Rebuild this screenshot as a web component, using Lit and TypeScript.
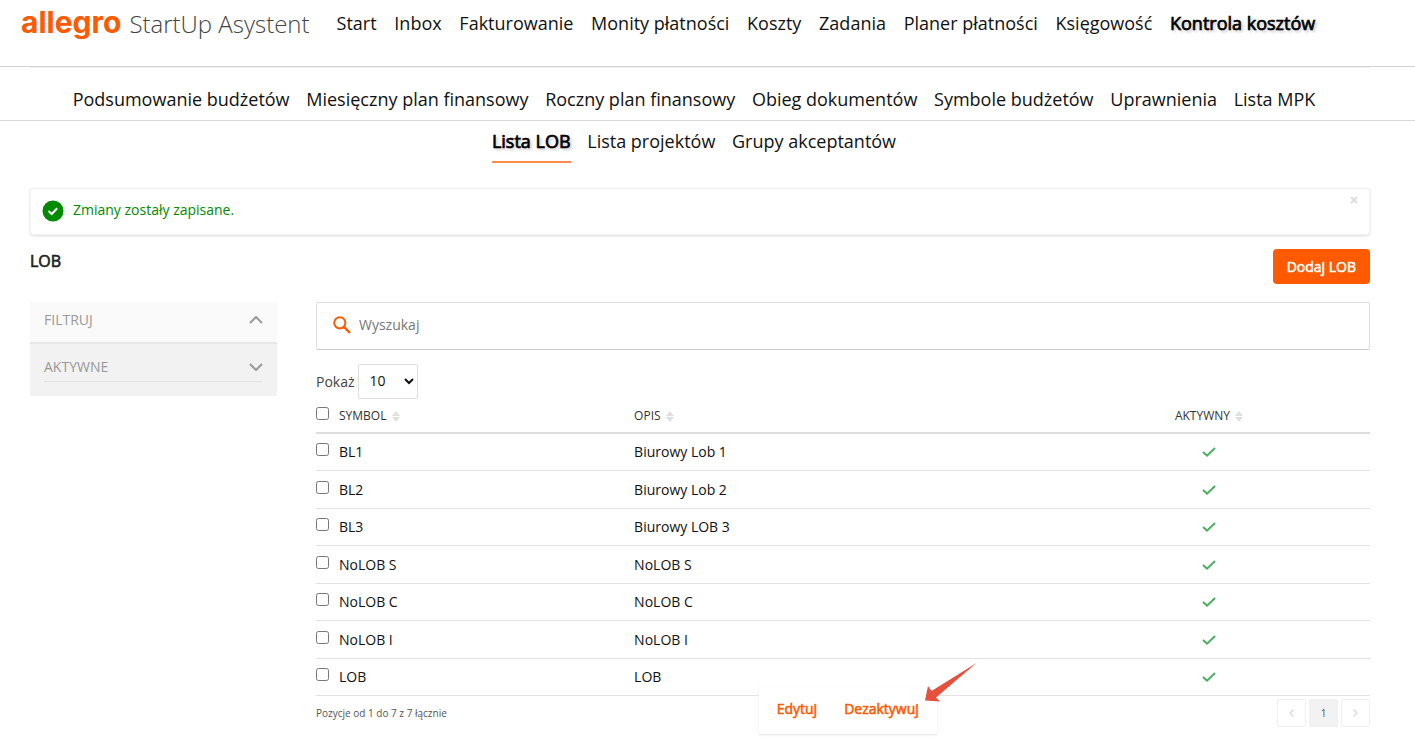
import { LitElement, html, css, svg } from "lit";
import { customElement, state } from "lit/decorators.js";
import { classMap } from "lit/directives/class-map.js";

interface Lob {
  symbol: string;
  opis: string;
}

const MAIN_NAV = [
  "Start",
  "Inbox",
  "Fakturowanie",
  "Monity płatności",
  "Koszty",
  "Zadania",
  "Planer płatności",
  "Księgowość",
  "Kontrola kosztów",
];

const SECTION_NAV = [
  "Podsumowanie budżetów",
  "Miesięczny plan finansowy",
  "Roczny plan finansowy",
  "Obieg dokumentów",
  "Symbole budżetów",
  "Uprawnienia",
  "Lista MPK",
];

const TABS = ["Lista LOB", "Lista projektów", "Grupy akceptantów"];

const ROWS: Lob[] = [
  { symbol: "BL1", opis: "Biurowy Lob 1" },
  { symbol: "BL2", opis: "Biurowy Lob 2" },
  { symbol: "BL3", opis: "Biurowy LOB 3" },
  { symbol: "NoLOB S", opis: "NoLOB S" },
  { symbol: "NoLOB C", opis: "NoLOB C" },
  { symbol: "NoLOB I", opis: "NoLOB I" },
  { symbol: "LOB", opis: "LOB" },
];

const chevron = (points: string) => html`
  <svg class="chevron" viewBox="0 0 14 8" aria-hidden="true">
    ${svg`<polyline points=${points} fill="none" stroke="currentColor" stroke-width="2" />`}
  </svg>
`;

const sortIcon = html`
  <svg class="sort" viewBox="0 0 8 11" aria-hidden="true">
    <path d="M4 0 8 5H0z M0 6h8L4 11z" fill="#e0e0e0" />
  </svg>
`;

const tick = html`
  <svg class="tick" viewBox="0 0 14 10" role="img" aria-label="tak">
    <path d="M1 5 5 8.600 13 1" fill="none" stroke="#4caf5f" stroke-width="2" />
  </svg>
`;

@customElement("app-root")
export class AppRoot extends LitElement {
  @state() private noticeOpen = true;

  static styles = css`
    :host {
      display: block;
      min-height: 100vh;
      box-sizing: border-box;
      background: #fff;
      color: #222;
      font: 14px/20px "Open Sans", "Noto Sans", sans-serif;
    }
    * {
      box-sizing: border-box;
    }
    a {
      color: inherit;
      text-decoration: none;
    }
    button,
    input,
    select {
      font: inherit;
      color: inherit;
      margin: 0;
    }
    button {
      cursor: pointer;
      border: 0;
      background: none;
      padding: 0;
    }
    .strong,
    .nav .current {
      -webkit-text-stroke: 0.04em currentColor;
    }
    .topbar {
      display: flex;
      align-items: flex-start;
      height: 67px;
      padding: 8px 0 0 21px;
      border-bottom: 1px solid #d2d2d2;
      white-space: nowrap;
    }
    .brand {
      display: flex;
      align-items: baseline;
      gap: 8px;
      margin-right: 27px;
      line-height: 28px;
    }
    .brand-name {
      color: #ff5a00;
      font: 700 30px/28px Inter, sans-serif;
    }
    .brand-product {
      color: #444;
      font-size: 24px;
      font-weight: 300;
    }
    .nav {
      font-size: 18px;
      line-height: 30px;
      color: #111;
    }
    .nav a {
      display: inline-block;
      margin-right: 12px;
    }
    .main-nav a {
      margin-right: 13px;
    }
    .nav .current {
      color: #000;
      text-shadow: 2px 2px 3px #bbb;
    }
    .section-nav {
      padding: 0 15px 6px 0;
      text-align: center;
      border-bottom: 1px solid #d8d8d8;
    }
    .section-nav::before {
      content: "";
      display: block;
      height: 1px;
      margin: 0 30px 16px;
      background: #f0f0f0;
    }
    .tabs {
      padding: 5px 15px 0 0;
      text-align: center;
    }
    .tabs .current {
      height: 37px;
      border-bottom: 2px solid #ff8a4d;
    }
    .content {
      padding: 25px 45px 0 30px;
    }
    .notice {
      display: flex;
      align-items: flex-start;
      height: 47px;
      padding: 11px 11px 0;
      border: 1px solid #f2f2f2;
      border-radius: 3px;
      box-shadow: 0 1px 3px #ddd;
      color: #008a00;
    }
    .notice-icon {
      width: 22px;
      height: 22px;
      margin-right: 9px;
    }
    .notice-close {
      display: flex;
      margin: -4px 0 0 auto;
    }
    .notice-close svg {
      width: 8px;
      height: 8px;
    }
    .heading {
      display: flex;
      align-items: flex-start;
      justify-content: space-between;
      margin-top: 14px;
    }
    h1 {
      margin: 1px 0 0;
      font-size: 16px;
      line-height: 22px;
      font-weight: 400;
    }
    .add {
      height: 35px;
      padding: 0 14px;
      border-radius: 4px;
      background: #ff5a00;
      color: #fff;
    }
    .columns {
      display: grid;
      grid-template-columns: 247px minmax(0, 1fr);
      gap: 39px;
      align-items: start;
      margin-top: 18px;
    }
    .filters {
      color: #999;
      background: #f2f2f2;
      padding-bottom: 14px;
    }
    .filter-head,
    .filter-item {
      display: flex;
      align-items: center;
      justify-content: space-between;
      width: 100%;
    }
    .filter-head {
      height: 42px;
      padding: 0 14px 4px;
      background: #fafafa;
      border-bottom: 2px solid #e8e8e8;
    }
    .filter-item {
      width: calc(100% - 28px);
      height: 30px;
      margin: 8px 14px 0;
      border-bottom: 1px solid #e2e2e2;
    }
    .chevron {
      width: 14px;
      height: 8px;
    }
    .search {
      display: flex;
      align-items: center;
      gap: 8px;
      height: 48px;
      padding: 0 16px 2px;
      border: 1px solid #ddd;
      border-bottom-color: #ccc;
      border-radius: 2px;
    }
    .search svg {
      width: 18px;
      height: 18px;
    }
    .search input {
      flex: 1;
      border: 0;
      outline: 0;
      padding: 0;
    }
    .search input::placeholder {
      color: #777;
      opacity: 1;
    }
    .page-size {
      display: flex;
      align-items: center;
      gap: 3px;
      margin-top: 14px;
      color: #444;
    }
    .page-size select {
      width: 60px;
      height: 35px;
      padding: 0 0 2px 7px;
      border: 1px solid #ddd;
      border-radius: 2px;
      background: #fff;
      color: #111;
    }
    table {
      width: 100%;
      border-collapse: separate;
      border-spacing: 0;
      table-layout: fixed;
      color: #111;
    }
    th,
    td {
      padding: 0;
      text-align: left;
      vertical-align: middle;
      border-bottom: 1px solid #e2e2e2;
    }
    th {
      height: 35px;
      padding-top: 1px;
      font-size: 12px;
      font-weight: 400;
      color: #333;
      border-bottom: 2px solid #ddd;
    }
    td {
      height: 38px;
    }
    tr:nth-child(odd) td {
      height: 37px;
    }
    .check-col {
      width: 23px;
    }
    .symbol-col {
      width: 28%;
    }
    .active-col {
      width: 322px;
      text-align: center;
    }
    .box {
      display: block;
      width: 13px;
      height: 13px;
      margin-bottom: 5px;
    }
    .sort {
      width: 8px;
      height: 11px;
      margin-left: 2px;
      vertical-align: -2px;
    }
    .tick {
      width: 14px;
      height: 10px;
    }
    .results {
      position: relative;
    }
    .table-foot {
      display: flex;
      justify-content: space-between;
      align-items: center;
      padding-top: 3px;
      color: #555;
      font-size: 10px;
    }
    .pager {
      display: flex;
      gap: 3px;
    }
    .pager button {
      display: flex;
      align-items: center;
      justify-content: center;
      width: 29px;
      height: 28px;
      border: 1px solid #f0f0f0;
      border-radius: 2px;
      color: #ddd;
    }
    .pager .page {
      background: #f2f2f2;
      color: #555;
    }
    .pager svg {
      width: 5px;
      height: 8px;
    }
    .actions {
      position: absolute;
      left: 42%;
      bottom: -7px;
      display: flex;
      gap: 27px;
      padding: 13px 18px 15px;
      background: #fff;
      box-shadow: 0 1px 2px #e4e4e4;
    }
    .actions button {
      color: #ff5a00;
    }
    .pointer {
      position: absolute;
      right: -40px;
      top: -23px;
      width: 52px;
      height: 40px;
    }
  `;

  private links(items: string[], current: string) {
    return items.map(
      (item) =>
        html`<a href="#" class=${classMap({ current: item === current })}>${item}</a> `
    );
  }

  private row(item: Lob) {
    return html`
      <tr>
        <td><input class="box" type="checkbox" aria-label="Zaznacz ${item.symbol}" /></td>
        <td>${item.symbol}</td>
        <td>${item.opis}</td>
        <td class="active-col">${tick}</td>
      </tr>
    `;
  }

  render() {
    return html`
      <header class="topbar">
        <a class="brand" href="#">
          <span class="brand-name">allegro</span>
          <span class="brand-product">StartUp Asystent</span>
        </a>
        <nav class="nav main-nav">${this.links(MAIN_NAV, "Kontrola kosztów")}</nav>
      </header>
      <nav class="nav section-nav">${this.links(SECTION_NAV, "")}</nav>
      <nav class="nav tabs">${this.links(TABS, "Lista LOB")}</nav>

      <main class="content">
        ${this.noticeOpen
          ? html`
              <div class="notice" role="status">
                <svg class="notice-icon" viewBox="0 0 22 22" aria-hidden="true">
                  <circle cx="11" cy="11" r="10.500" fill="#008a00" />
                  <path d="M6.500 11 9.700 14 15.200 8.300" fill="none" stroke="#fff" stroke-width="2" />
                </svg>
                <span>Zmiany zostały zapisane.</span>
                <button
                  class="notice-close"
                  aria-label="Zamknij"
                  @click=${() => (this.noticeOpen = false)}
                >
                  <svg viewBox="0 0 8 8">
                    <path d="M1 1 7 7M7 1 1 7" stroke="#ddd" stroke-width="2" />
                  </svg>
                </button>
              </div>
            `
          : null}

        <div class="heading">
          <h1 class="strong">LOB</h1>
          <button class="add strong">Dodaj LOB</button>
        </div>

        <div class="columns">
          <aside class="filters">
            <button class="filter-head">FILTRUJ ${chevron("1,7 7,1 13,7")}</button>
            <button class="filter-item">AKTYWNE ${chevron("1,1 7,7 13,1")}</button>
          </aside>

          <section class="results">
            <label class="search">
              <svg viewBox="0 0 18 18" aria-hidden="true">
                <circle cx="6.800" cy="6.800" r="5.600" fill="none" stroke="#ff5a00" stroke-width="2" />
                <path d="M11 11 17 17" stroke="#ff5a00" stroke-width="2.400" />
              </svg>
              <input type="text" placeholder="Wyszukaj" aria-label="Wyszukaj" />
            </label>

            <label class="page-size">
              Pokaż
              <select>
                <option>10</option>
                <option>25</option>
                <option>50</option>
              </select>
            </label>

            <table>
              <thead>
                <tr>
                  <th class="check-col">
                    <input class="box" type="checkbox" aria-label="Zaznacz wszystkie" />
                  </th>
                  <th class="symbol-col">SYMBOL ${sortIcon}</th>
                  <th>OPIS ${sortIcon}</th>
                  <th class="active-col">AKTYWNY ${sortIcon}</th>
                </tr>
              </thead>
              <tbody>
                ${ROWS.map((item) => this.row(item))}
              </tbody>
            </table>

            <div class="table-foot">
              <span>Pozycje od 1 do 7 z 7 łącznie</span>
              <div class="pager">
                <button aria-label="Poprzednia strona">
                  <svg viewBox="0 0 5 8"><path d="M4.500 .5 1 4 4.500 7.500" fill="none" stroke="currentColor" stroke-width="1.500" /></svg>
                </button>
                <button class="page">1</button>
                <button aria-label="Następna strona">
                  <svg viewBox="0 0 5 8"><path d="M.5 .5 4 4 .5 7.500" fill="none" stroke="currentColor" stroke-width="1.500" /></svg>
                </button>
              </div>
            </div>

            <div class="actions">
              <button class="strong">Edytuj</button>
              <button class="strong">Dezaktywuj</button>
              <svg class="pointer" viewBox="0 0 52 40" aria-hidden="true">
                <path d="M51.500 0 11 34.500 15 38.500 0 37.500 3 23 6.500 28z" fill="#e6503c" />
              </svg>
            </div>
          </section>
        </div>
      </main>
    `;
  }
}
